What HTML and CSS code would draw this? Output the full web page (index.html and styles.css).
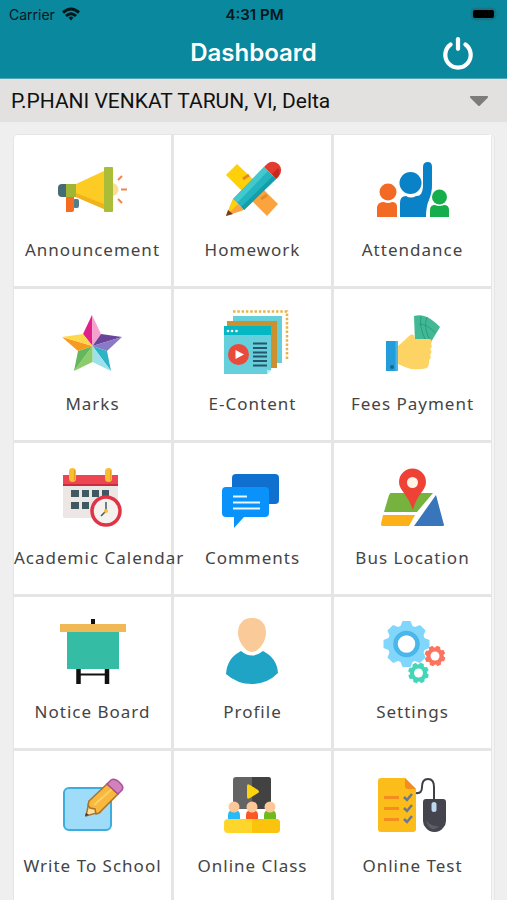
FILE: index.html
```
<!DOCTYPE html>
<html lang="en">
<head>
  <meta charset="UTF-8">
  <meta name="viewport" content="width=device-width, initial-scale=1.0">
  <title>Dashboard</title>
  <link rel="stylesheet" href="styles.css">
</head>
<body>
  <header class="header">
    <div class="status-bar">
      <div class="carrier">
        <span>Carrier</span>
        <svg class="wifi" viewBox="0 0 18 14" fill="none" stroke="#06161a" stroke-width="3">
          <path d="M1 5.500Q9-1.500 17 5.500"/>
          <path d="M4 9Q9 4.500 14 9"/>
          <path d="M6.500 10.500Q9 8.500 11.500 10.500L9 13.500Z" fill="#06161a" stroke="none"/>
        </svg>
      </div>
      <span class="time">4:31 PM</span>
      <svg class="battery" viewBox="0 0 30 14">
        <rect x="1" y="1" width="25" height="12" rx="4" fill="#08788a" stroke="#2b7380"/>
        <rect x="3" y="3" width="21" height="8" rx="2" fill="#000"/>
        <path d="M27.500 5q2 2 0 4z" fill="#2b7380"/>
      </svg>
    </div>
    <div class="title-bar">
      <h1>Dashboard</h1>
      <button class="power" type="button" aria-label="Log out">
        <svg viewBox="0 0 32 34" fill="none" stroke="#fff" stroke-width="4" stroke-linecap="round">
          <path d="M9 9A12 12 0 1 0 23 9"/>
          <path d="M16 4V13"/>
        </svg>
      </button>
    </div>
  </header>

  <div class="student">
    <select aria-label="Student">
      <option>P.PHANI VENKAT TARUN, VI, Delta</option>
    </select>
    <svg class="arrow" viewBox="0 0 20 12"><path d="M2 1H18Q20 1 18.500 3L11 10.500Q10 11.500 9 10.500L1.500 3Q0 1 2 1Z" fill="#7f7b7b"/></svg>
  </div>

  <main class="menu">
    <a class="tile" href="#announcement">
      <svg class="icon" viewBox="0 0 80 80">
        <path d="M13 34H9Q5 34 5 38V43Q5 47 9 47H13Z" fill="#456b75"/>
        <rect x="20" y="49" width="6" height="9" rx="2" fill="#557c8b"/>
        <path d="M13 47H21V60Q21 62 19 62H13Z" fill="#f36c21"/>
        <rect x="13" y="34" width="10" height="13" fill="#9fb535"/>
        <path d="M23 34L51 21V59L23 47Z" fill="#fccb24"/>
        <path d="M23 43L51 54V59L23 47Z" fill="#f0b31d"/>
        <path d="M59 33A6.500 6.500 0 0 1 59 46Z" fill="#fbdc93"/>
        <rect x="51" y="17" width="9" height="45" rx="1" fill="#a9bd38"/>
        <path d="M65 30L69 26M68 39.500H74M65 49L69 53" stroke="#f0854f" stroke-width="2"/>
      </svg>
      <span class="label">Announcement</span>
    </a>
    <a class="tile" href="#homework">
      <svg class="icon" viewBox="0 0 80 80">
        <path d="M13 25L24 14L45 34L34 46Z" fill="#fdd00a"/>
        <path d="M45 34L65 54L54 66L34 46Z" fill="#fba33c"/>
        <path d="M30 29L36 25M48 49L54 45" stroke="#e58929" stroke-width="3"/>
        <path d="M51 17L54 14A8.500 8.500 0 0 1 66 26L63 29Z" fill="#e33b2d"/>
        <path d="M59 24L65 18Q68 22 65 27L63 29Z" fill="#c8281f"/>
        <path d="M51 17L63 29L31 60L20 49Z" fill="#22b5c0"/>
        <path d="M51 17L55 21L24 53L20 49Z" fill="#44c8cf"/>
        <path d="M60 26L63 29L31 60L28 57Z" fill="#149daa"/>
        <path d="M20 49L31 60L13 66Z" fill="#fba33c"/>
        <path d="M20 49L25 54L13 66Z" fill="#fdd00a"/>
        <path d="M15 60L20 64L13 66Z" fill="#70402a"/>
      </svg>
      <span class="label">Homework</span>
    </a>
    <a class="tile" href="#attendance">
      <svg class="icon" viewBox="0 0 80 80">
        <g fill="#f26a24">
          <circle cx="15" cy="42" r="8.500"/>
          <path d="M4 67V57Q5 52 11 52Q15 54 19 52Q24 52 24 57V67Z"/>
        </g>
        <g fill="#0a82c8">
          <circle cx="37.500" cy="33" r="11"/>
          <path d="M27 67V53Q27 46 33 46Q38 49 43 46Q49 47 50 37V17Q50 12 55 12Q59 12 59 17V36Q59 42 56 50Q53 56 53 67Z"/>
        </g>
        <g fill="#16ad4d">
          <circle cx="66.500" cy="47" r="7.500"/>
          <path d="M57 67V60Q57 55 62 55Q66 57 71 55Q76 55 76 60V67Z"/>
        </g>
      </svg>
      <span class="label">Attendance</span>
    </a>

    <a class="tile" href="#marks">
      <svg class="icon" viewBox="0 0 80 80">
        <path d="M39.500 42L30 30L39 11Z" fill="#e0218a"/>
        <path d="M39.500 42L39 11L48 30Z" fill="#f5a1cd"/>
        <path d="M39.500 42L48 30L69 33Z" fill="#68459b"/>
        <path d="M39.500 42L69 33L54 47Z" fill="#8979c6"/>
        <path d="M39.500 42L54 47L58 67Z" fill="#2eb2c6"/>
        <path d="M39.500 42L58 67L39.500 58Z" fill="#9be2ed"/>
        <path d="M39.500 42V58L21 67Z" fill="#8ccc6c"/>
        <path d="M39.500 42L21 67L25 47Z" fill="#64b85b"/>
        <path d="M39.500 42L25 47L9 33Z" fill="#f89a1f"/>
        <path d="M39.500 42L9 33L30 30Z" fill="#fdd84b"/>
      </svg>
      <span class="label">Marks</span>
    </a>
    <a class="tile" href="#content">
      <svg class="icon" viewBox="0 0 80 80">
        <path d="M20 7.500H74V56" fill="none" stroke="#e6b44e" stroke-width="2.500" stroke-dasharray="2.500 1.800"/>
        <rect x="20" y="12" width="49" height="47" fill="#63cfdb"/>
        <rect x="14" y="17" width="50" height="47" fill="#cc902f"/>
        <path d="M11 22H58V66L54 70H11Z" fill="#65cfdb"/>
        <rect x="11" y="22" width="47" height="9" fill="#05b7c3"/>
        <path d="M58 66L54 70V66Z" fill="#b7edf1"/>
        <g fill="#fff">
          <circle cx="15" cy="27" r="1.300"/>
          <circle cx="19" cy="27" r="1.300"/>
          <circle cx="23.500" cy="27" r="1.300"/>
        </g>
        <circle cx="25.500" cy="50.500" r="10.500" fill="#e84a3c"/>
        <path d="M22.500 46V55L31 50.500Z" fill="#fff"/>
        <path d="M40 39.500H54M40 44H54M40 48.500H54M40 52.500H54M40 57H54M40 61.500H54" stroke="#27556b" stroke-width="2.200"/>
      </svg>
      <span class="label">E-Content</span>
    </a>
    <a class="tile" href="#fees">
      <svg class="icon" viewBox="0 0 80 80">
        <path d="M41 12Q48 10 54 13Q60 16 67 23L58 38H42Z" fill="#42b894"/>
        <path d="M48 12Q46 24 53 37M54 13Q50 24 57 36M46 20Q55 20 62 29" fill="none" stroke="#2b9d7d" stroke-width="1"/>
        <path d="M25 42Q31 37 36 32Q41 28 42 35H57Q60 36 58 40Q60 43 57 45Q60 48 57 51Q59 54 56 56Q57 60 54 64Q48 66 38 65Q31 63 25 60Z" fill="#fdd463"/>
        <rect x="13" y="37" width="12" height="30" fill="#239cda"/>
        <path d="M22.500 37H25V67H22.500Z" fill="#4eb5e7"/>
        <circle cx="19" cy="63" r="2" fill="#1b658e"/>
      </svg>
      <span class="label">Fees Payment</span>
    </a>

    <a class="tile" href="#calendar">
      <svg class="icon" viewBox="0 0 80 80">
        <rect x="10" y="17" width="55" height="43" rx="1" fill="#ece7e5"/>
        <rect x="10" y="17" width="55" height="11" fill="#ee4553"/>
        <rect x="10" y="26" width="55" height="2" fill="#c92c3f"/>
        <rect x="16" y="10" width="7" height="14" rx="3.500" fill="#f8bd31"/>
        <rect x="52" y="10" width="7" height="14" rx="3.500" fill="#f8bd31"/>
        <path d="M21.500 12V22M57.500 12V22" stroke="#e99b20"/>
        <g fill="#405862">
          <rect x="18" y="32" width="8" height="7"/>
          <rect x="29" y="32" width="7" height="7"/>
          <rect x="39" y="32" width="7" height="7"/>
          <rect x="49" y="32" width="7" height="7"/>
          <rect x="18" y="44" width="8" height="7"/>
          <rect x="29" y="44" width="7" height="7"/>
        </g>
        <circle cx="53" cy="53" r="14" fill="#f4f1ef" stroke="#de3445" stroke-width="3.500"/>
        <path d="M53 44V53L48 58" fill="none" stroke="#405862" stroke-width="1.500"/>
        <circle cx="53" cy="53" r="2" fill="#f8bd31"/>
      </svg>
      <span class="label">Academic Calendar</span>
    </a>
    <a class="tile" href="#comments">
      <svg class="icon" viewBox="0 0 80 80">
        <rect x="19" y="16" width="47" height="30" rx="4" fill="#1070d0"/>
        <path d="M13 29H52Q56 29 56 33V55Q56 59 52 59H31L21 70V59H13Q9 59 9 55V33Q9 29 13 29Z" fill="#0a92fb"/>
        <path d="M20 38.500H34M20 44.500H47M20 50.500H47" stroke="#e8f6ff" stroke-width="2.200"/>
      </svg>
      <span class="label">Comments</span>
    </a>
    <a class="tile" href="#bus">
      <svg class="icon" viewBox="0 0 80 80">
        <path d="M18 35H60L44 54H11L16 37Q17 35 18 35Z" fill="#76b33e"/>
        <path d="M10 57H42L36 68H9Q8 68 8 66Z" fill="#fbb117"/>
        <path d="M63 37L71 67Q71 68 70 68H41Z" fill="#3975bb"/>
        <path d="M40 52Q37 43 31 35Q26 29 26 24A13.500 13.500 0 0 1 53 24Q53 29 48 35Q42 43 40 52Z" fill="#ee4237"/>
        <circle cx="39.500" cy="24.500" r="5.500" fill="#fff5e4"/>
      </svg>
      <span class="label">Bus Location</span>
    </a>

    <a class="tile" href="#notice">
      <svg class="icon" viewBox="0 0 80 80">
        <rect x="38" y="7" width="4" height="6" fill="#111"/>
        <path d="M25.500 56V72M54 56V72" stroke="#111" stroke-width="4.500"/>
        <path d="M25 62.500H54" stroke="#111" stroke-width="2"/>
        <rect x="14" y="20" width="52" height="37" fill="#34bda4"/>
        <rect x="7" y="12" width="66" height="8" fill="#f0b955"/>
      </svg>
      <span class="label">Notice Board</span>
    </a>
    <a class="tile" href="#profile">
      <svg class="icon" viewBox="0 0 80 80">
        <path d="M39 6C48 6 53 12 53 21C53 29 46 40 39 40C32 40 25 29 25 21C25 12 30 6 39 6Z" fill="#facb99"/>
        <path d="M28 39Q39 48 50 39Q64 46 65 61Q54 72 39 72Q24 72 13 62Q14 46 28 39Z" fill="#1fa4c6"/>
      </svg>
      <span class="label">Profile</span>
    </a>
    <a class="tile" href="#settings">
      <svg class="icon" viewBox="0 0 80 80">
        <defs>
          <g id="gear">
            <circle r="19"/>
            <path id="teeth" d="M-6-18L-4-23H4L6-18V18L4 23H-4L-6 18Z"/>
            <use href="#teeth" transform="rotate(45)"/>
            <use href="#teeth" transform="rotate(90)"/>
            <use href="#teeth" transform="rotate(135)"/>
          </g>
        </defs>
        <use href="#gear" transform="translate(33.500 32)" fill="#80d7fb"/>
        <circle cx="33.500" cy="32" r="11" fill="#fff" stroke="#4ab6e9" stroke-width="4.500"/>
        <use href="#gear" transform="translate(62 44) rotate(20) scale(.45)" fill="#fb745f"/>
        <circle cx="62" cy="44" r="4.500" fill="#fff"/>
        <use href="#gear" transform="translate(45.500 61) rotate(20) scale(.45)" fill="#45d5b8"/>
        <circle cx="45.500" cy="61" r="4.500" fill="#fff"/>
      </svg>
      <span class="label">Settings</span>
    </a>

    <a class="tile" href="#write">
      <svg class="icon" viewBox="0 0 80 80">
        <rect x="11" y="22" width="47" height="42" rx="5" fill="#9fdcf9" stroke="#3caddf" stroke-width="2"/>
        <path d="M33 50L36 36L47 46Z" fill="#fde1a0" stroke="#a9742a" stroke-width="1.500"/>
        <path d="M36 35L54 18L65 28L46 47L43 48L42 43L37 42L35 39Z" fill="#f9b83c" stroke="#a9742a" stroke-width="1.500"/>
        <path d="M41 39L59 23" stroke="#fcd068" stroke-width="2"/>
        <path d="M54 18L58 14Q61 12 65 15L68 18Q71 21 69 24L65 28Z" fill="#d381bd" stroke="#a84f96" stroke-width="1.500"/>
        <path d="M33 47L36 49L32 50Z" fill="#44352c"/>
      </svg>
      <span class="label">Write To School</span>
    </a>
    <a class="tile" href="#class">
      <svg class="icon" viewBox="0 0 80 80">
        <rect x="20" y="11" width="38" height="32" rx="3" fill="#646464"/>
        <path d="M39 11H55Q58 11 58 14V43H39Z" fill="#424242"/>
        <path d="M34 20Q34 17 37 19L45 24Q47 26 45 27L37 32Q34 34 34 31Z" fill="#fcd40d"/>
        <path d="M15 54V49Q15 44 21 44Q27 44 27 49V54Z" fill="#28b9f7"/>
        <path d="M33 54V49Q33 44 39 44Q45 44 45 49V54Z" fill="#fb5723"/>
        <path d="M51 54V49Q51 44 57 44Q63 44 63 49V54Z" fill="#70bb1b"/>
        <g fill="#fcc798">
          <circle cx="21" cy="41" r="5.500"/>
          <circle cx="39" cy="41" r="5.500"/>
          <circle cx="57" cy="41" r="5.500"/>
        </g>
        <rect x="11" y="53" width="56" height="14" rx="4" fill="#fdd52b"/>
        <path d="M39 53H63Q67 53 67 57V63Q67 67 63 67H39Z" fill="#fcc30d"/>
      </svg>
      <span class="label">Online Class</span>
    </a>
    <a class="tile" href="#test">
      <svg class="icon" viewBox="0 0 80 80">
        <path d="M8 12H32L43 23V63Q43 66 40 66H8Q5 66 5 63V15Q5 12 8 12Z" fill="#fcbc19"/>
        <path d="M32 12L43 23H35Q32 23 32 20Z" fill="#f58c1f"/>
        <path d="M11 31.500H26M11 42.500H26M11 53.500H26" stroke="#f58c1f" stroke-width="3"/>
        <path d="M31 31L34 34L39 28M31 42L34 45L39 39M31 53L34 56L39 50" fill="none" stroke="#6c7890" stroke-width="2.500"/>
        <path d="M43 27Q49 28 49 21Q49 13 55 13Q61 13 61 21V34" fill="none" stroke="#3f4047" stroke-width="2"/>
        <path d="M53 33H70Q73 33 73 36V55Q73 59 70 62Q67 66 61.500 66Q56 66 53 62Q50 59 50 55V36Q50 33 53 33Z" fill="#44444e"/>
        <path d="M53 54Q58 61 66 60Q63 64 59 63Q54 61 53 54Z" fill="#5d5d67"/>
        <rect x="58.500" y="36" width="5" height="10" rx="2.500" fill="#bfd8ee"/>
      </svg>
      <span class="label">Online Test</span>
    </a>
  </main>
</body>
</html>
```
FILE: styles.css
```
* {
  box-sizing: border-box;
}

body {
  margin: 0;
  font-family: Inter, "Liberation Sans", sans-serif;
  background-color: #efefef;
  color: #111;
  overflow-x: hidden;
}

.header {
  background-color: #09889e;
  border-bottom: 1px solid #4fa5b3;
}

.status-bar {
  display: grid;
  grid-template-columns: 1fr auto 1fr;
  align-items: center;
  height: 28px;
  padding: 0 7px 0 9px;
  font-size: 14px;
  color: #06161a;
}

.carrier {
  display: flex;
  align-items: center;
  gap: 7px;
}

.wifi {
  width: 18px;
  height: 14px;
}

.time {
  font-size: 15px;
  font-weight: 600;
}

.battery {
  width: 30px;
  height: 14px;
  justify-self: end;
}

.title-bar {
  display: grid;
  grid-template-columns: 1fr auto 1fr;
  align-items: center;
  height: 50px;
  padding: 0 32px;
}

.title-bar h1 {
  grid-column: 2;
  margin: 0;
  font-size: 24px;
  font-weight: 600;
  line-height: 48px;
  color: #fff;
}

.power {
  justify-self: end;
  width: 34px;
  height: 36px;
  padding: 0;
  border: none;
  background: none;
  cursor: pointer;
}

.power svg {
  display: block;
  width: 34px;
  height: 36px;
}

.student {
  display: grid;
  align-items: center;
  height: 43px;
  background-color: #e3e1e0;
}

.student select,
.student .arrow {
  grid-area: 1 / 1;
}

.student select {
  appearance: none;
  width: 100%;
  height: 43px;
  padding: 0 40px 0 11px;
  border: none;
  border-radius: 0;
  background: none;
  font-family: Roboto, "Liberation Sans", sans-serif;
  font-size: 21px;
  color: #111;
}

.arrow {
  justify-self: end;
  width: 20px;
  height: 12px;
  margin-right: 18px;
  pointer-events: none;
}

.menu {
  display: grid;
  grid-template-columns: repeat(3, 1fr);
  gap: 3px;
  margin: 12px 15px 0 13px;
  border: 1px solid #e5e5e5;
  border-radius: 5px;
  background-color: #e5e5e5;
  box-shadow: 2px 0 0 #f5f5f5, 3px 0 0 #e5e5e5;
}

.tile {
  min-width: 0;
  height: 151px;
  padding-top: 15px;
  background-color: #fff;
  text-align: center;
  text-decoration: none;
  color: #444;
}

.tile:first-child {
  border-top-left-radius: 4px;
}

.tile:hover .label {
  color: #09889e;
}

.icon {
  display: block;
  width: 80px;
  height: 80px;
  margin: 0 auto 8px;
}

/* long names run over into the next tile */
.label {
  display: block;
  position: relative;
  z-index: 1;
  font-family: "Noto Sans", "Open Sans", sans-serif;
  font-size: 17px;
  line-height: 24px;
  letter-spacing: 1px;
  white-space: nowrap;
}
```
